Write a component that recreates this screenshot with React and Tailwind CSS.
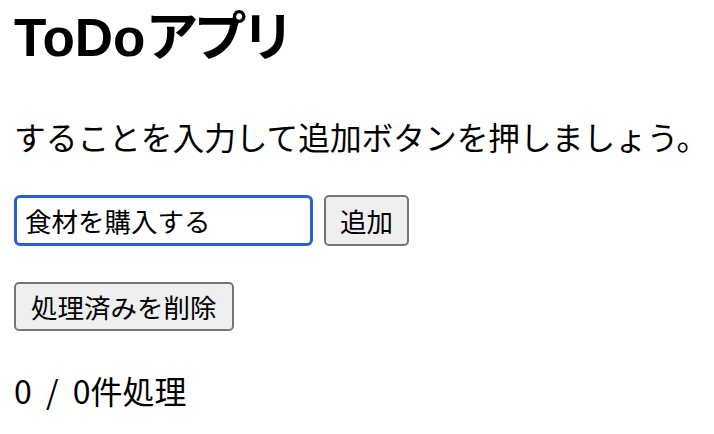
import { useState } from 'react';

export default function App() {
  const [text, setText] = useState('食材を購入する');
  const [todos] = useState([]);

  const done = todos.filter((t) => t.done).length;

  return (
    <div className="px-[14px] pt-[11px] text-black bg-white min-h-screen font-['Noto_Sans_CJK_JP',sans-serif]">
      <h1 className="text-[53px] leading-[54px] font-bold font-['Liberation_Sans','Noto_Sans_CJK_JP',sans-serif]">
        ToDo<span className="tracking-[-5px]">アプリ</span>
      </h1>

      <p className="mt-[51px] text-[31.7px] leading-[40px] whitespace-nowrap">
        することを入力して追加ボタンを押しましょう。
      </p>

      <div className="mt-[39px] flex items-center gap-[11px]">
        <input
          type="text"
          value={text}
          onChange={(e) => setText(e.target.value)}
          className="w-[299px] h-[51px] border-[3px] border-[#2a62c9] rounded-[6px] px-[8px] text-[26.5px] outline-none"
        />
        <button className="h-[51px] px-[14px] text-[26.5px] bg-[#efefef] border-2 border-[#767676] rounded-[5px]">
          追加
        </button>
      </div>

      <div className="mt-[36px]">
        <button className="h-[49px] px-[15px] text-[26.5px] bg-[#efefef] border-2 border-[#767676] rounded-[5px]">
          処理済みを削除
        </button>
      </div>

      <p className="mt-[39px] text-[32px] leading-[40px] [word-spacing:7px]">
        {done} / {todos.length}件処理
      </p>
    </div>
  );
}
